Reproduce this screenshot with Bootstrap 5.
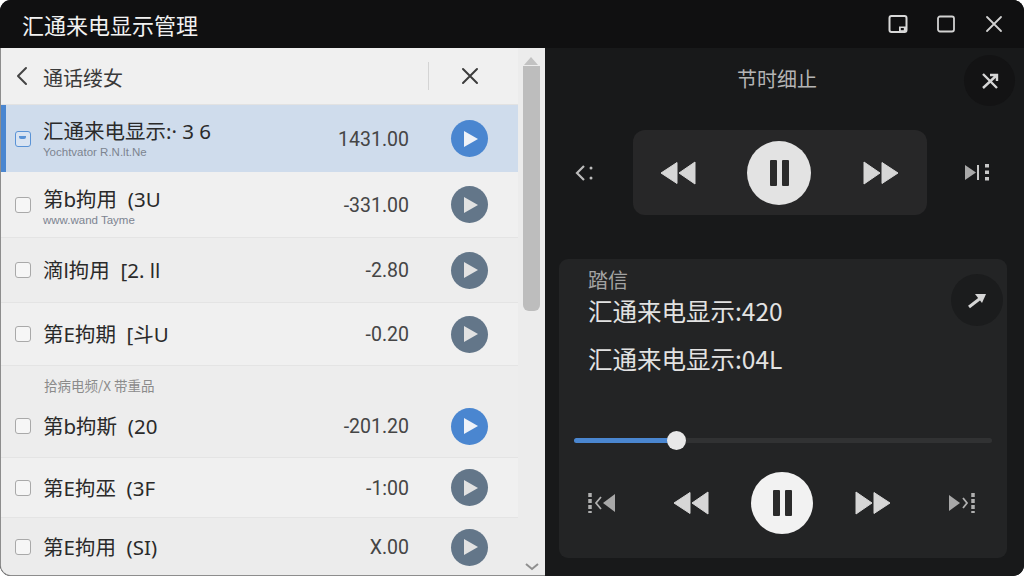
<!DOCTYPE html>
<html lang="zh">
<head>
<meta charset="utf-8">
<title>汇通来电显示管理</title>
<link href="https://cdn.jsdelivr.net/npm/bootstrap@5.3.0/dist/css/bootstrap.min.css" rel="stylesheet">
<style>
html,body{height:576px;overflow:hidden;background:#fff;}
body{font-family:"Noto Sans CJK SC","Noto Sans",sans-serif;}
.win{width:1024px;height:576px;border-radius:11px;overflow:hidden;background:#18191a;}
.titlebar{height:48px;background:#101011;color:#f2f2f2;padding:0 20px 0 23px;flex:none;}
.titlebar h1{font-size:22px;font-weight:400;margin:0 0 0 -1px;line-height:44px;}
.winbtns{gap:24px;}
.mainpane{height:528px;}
.leftpane{width:545px;flex:none;background:#f0f0f0;border-left:1px solid #8d8d8d;border-bottom:1px solid #8d8d8d;border-bottom-left-radius:11px;overflow:hidden;}
.listcol{width:517px;flex:none;}
.scrolltrack{width:27px;flex:none;background:#ececec;padding:3px 5px 0;position:relative;}
.scrollthumb{height:245px;margin-top:15px;background:#bdbdbd;border-radius:0 0 6px 6px;}
.scrollup{width:0;height:0;margin:0 auto;border:7px solid transparent;border-top:0;border-bottom:8px solid #c2c2c2;position:absolute;left:6px;top:9px;}
.lheader{height:57px;padding:0 39px 0 14px;border-bottom:1px solid #e2e2e2;color:#333;}
.lheader .ttl{font-size:20px;line-height:1;margin:3px 0 0 14px;color:#3a3a3a;}
.vsep{width:1px;height:28px;background:#d4d4d4;margin-right:32px;}
.calls{--bs-list-group-bg:transparent;--bs-list-group-border-width:0;}
.calls .callrow{display:flex;align-items:center;padding:0 30px 0 14px;border-bottom:1px solid #e4e4e4;background:#f0f0f0;color:#2a2a2a;}
.calls .callrow.h67{height:67px}.calls .callrow.h66{height:66px}.calls .callrow.h65{height:65px}.calls .callrow.h63{height:63px}.calls .callrow.h60{height:60px}.calls .callrow.h58{height:58px;border-bottom:0;background:#ececec}
.calls .callrow.alt{background:#ededed}
.calls .callrow.sel{background:#cfdcec;border-left:5px solid #4a86d0;padding-left:9px;border-bottom:0;}
.chk{width:16px;height:16px;border:1.5px solid #a9a9a9;border-radius:3px;background:#f6f6f6;flex:none;margin-right:12px;}
.sel .chk{border-color:#5a93d6;background:#d9e4f2;position:relative;}
.sel .chk::after{content:"";position:absolute;left:3px;top:4px;width:7px;height:3px;background:#5a93d6;border-radius:0 0 2px 2px;}
.cname{font-size:20.5px;line-height:24px;white-space:nowrap;font-family:"Noto Sans","Noto Sans CJK SC",sans-serif;}
.twoline{padding-top:4px;}
.csub{font-size:11.5px;line-height:13px;margin-top:3px;color:#7d8490;font-family:"Liberation Sans",sans-serif;white-space:nowrap;}
.camt{margin-left:auto;margin-top:2px;font-family:Roboto,sans-serif;font-size:19.5px;color:#454545;margin-right:42px;}
.playc{width:37px;height:37px;border-radius:50%;background:#637689;flex:none;display:flex;align-items:center;justify-content:center;padding-left:3px;}
.playc.blue{background:#4a86d0;}
.seclabel{font-size:13.5px;line-height:16px;color:#8b8b8b;padding:11px 0 0 43px;height:29px;background:#ededed;}
.rightpane{flex:1;background:#18191a;color:#d8d8d8;padding:0 17px 18px 14px;}
.rhead{height:82px;position:relative;}
.rhead .ttl2{font-size:20px;color:#b4b4b4;padding-right:12px;margin-top:-20px;}
.roundbtn{width:51px;height:51px;border-radius:50%;background:#131314;position:absolute;display:flex;align-items:center;justify-content:center;}
.rhead .roundbtn{right:-8px;top:7px;}
.transport{height:85px;margin-bottom:44px;padding:0 16px 0 16px;}
.tpanel{width:294px;height:85px;background:#272728;border-radius:12px;padding:0 28px 0 27px;}
.pausec{width:64px;height:64px;border-radius:50%;background:#e3e3e3;display:flex;align-items:center;justify-content:center;gap:5px;}
.pausec i{display:block;width:7px;height:26px;background:#2b2b2b;border-radius:1px;}
.pausec.lg{width:62px;height:62px;background:#f2f2f2;}
.cardbox{height:299px;background:#232425;border-radius:9px;border:0;position:relative;color:#e0e0e0;padding:11px 15px 0 15px;}
.cardbox .roundbtn{right:4px;top:15px;width:52px;height:52px;background:#1b1c1d;}
.clabel{font-size:20px;line-height:20px;color:#a3a3a3;padding-left:14px;margin-bottom:5px;}
.cline{font-size:24.5px;line-height:32px;padding-left:14px;font-weight:400;white-space:nowrap;color:#e2e2e2;}
.cline+.cline{margin-top:16px;}
.seekrow{margin-top:63px;height:20px;position:relative;}
.seektrack{height:5px;border-radius:3px;background:#313233;position:relative;}
.seekfill{height:5px;border-radius:3px;background:#4a86d0;}
.seekknob{position:absolute;top:-7px;width:19px;height:19px;border-radius:50%;background:#e8e8e8;margin-left:-10px;}
.bottomctl{padding:14px 16px 0 14px;}
.bottomctl .midgroup{gap:42px;}
</style>
</head>
<body>
<svg width="0" height="0" class="position-absolute">
<defs>
<symbol id="rew" viewBox="0 0 36 24"><path d="M17 1.500V22.500L1 12Z M35 1V23L19 12Z" fill="#d6d6d6" stroke="#d6d6d6" stroke-width="1" stroke-linejoin="round"/></symbol>
<symbol id="fwd" viewBox="0 0 36 24"><path d="M1 1V23L17 12Z M19 1.500V22.500L35 12Z" fill="#d6d6d6" stroke="#d6d6d6" stroke-width="1" stroke-linejoin="round"/></symbol>
</defs>
</svg>
<div class="win d-flex flex-column">
  <div class="titlebar d-flex align-items-center justify-content-between">
    <h1>汇通来电显示管理</h1>
    <div class="winbtns d-flex align-items-center">
      <svg width="20" height="20" viewBox="0 0 20 20"><rect x="1.500" y="2" width="17" height="16" rx="2" fill="none" stroke="#d8d8d8" stroke-width="2"/><path d="M11 12.500h7.500V18H11z" fill="#d8d8d8"/><rect x="12.800" y="14" width="3" height="2.200" fill="#101011"/></svg>
      <svg width="28" height="20" viewBox="0 0 28 20"><rect x="6" y="2.500" width="16" height="15" rx="2" fill="none" stroke="#d2d2d2" stroke-width="1.800"/></svg>
      <svg width="20" height="20" viewBox="0 0 20 20"><path d="M3 3L17 17M17 3L3 17" stroke="#d2d2d2" stroke-width="1.800" stroke-linecap="round"/></svg>
    </div>
  </div>
  <div class="mainpane d-flex">
    <div class="leftpane d-flex">
      <div class="listcol">
        <div class="lheader d-flex align-items-center">
          <svg width="14" height="20" viewBox="0 0 14 20"><path d="M11 2L3 10L11 18" fill="none" stroke="#444" stroke-width="2" stroke-linecap="round" stroke-linejoin="round"/></svg>
          <span class="ttl">通话缕女</span>
          <span class="vsep ms-auto"></span>
          <svg width="18" height="18" viewBox="0 0 18 18"><path d="M2 2L16 16M16 2L2 16" stroke="#3c3c3c" stroke-width="2" stroke-linecap="round"/></svg>
        </div>
        <div class="list-group list-group-flush calls rounded-0">
          <div class="list-group-item callrow sel h67"><span class="chk"></span><div><div class="cname">汇通来电显示:· 3 6</div><div class="csub">Yochtvator R.N.lt.Ne</div></div><span class="camt">1431.00</span><span class="playc blue"><svg width="16" height="18" viewBox="0 0 16 18"><path d="M1 1V17L15 9Z" fill="#eef2f8"/></svg></span></div>
          <div class="list-group-item callrow h66"><span class="chk"></span><div class="twoline"><div class="cname">第b拘用&nbsp; (3U</div><div class="csub">www.wand Tayme</div></div><span class="camt">-331.00</span><span class="playc"><svg width="16" height="18" viewBox="0 0 16 18"><path d="M1 1V17L15 9Z" fill="#e2e2e2"/></svg></span></div>
          <div class="list-group-item callrow alt h65"><span class="chk"></span><div class="cname">滴l拘用&nbsp; [2. ll</div><span class="camt">-2.80</span><span class="playc"><svg width="16" height="18" viewBox="0 0 16 18"><path d="M1 1V17L15 9Z" fill="#e2e2e2"/></svg></span></div>
          <div class="list-group-item callrow h63"><span class="chk"></span><div class="cname">第E拘期&nbsp; [斗U</div><span class="camt">-0.20</span><span class="playc"><svg width="16" height="18" viewBox="0 0 16 18"><path d="M1 1V17L15 9Z" fill="#e2e2e2"/></svg></span></div>
          <div class="seclabel">拾病电频/X 带重品</div>
          <div class="list-group-item callrow alt h63"><span class="chk"></span><div class="cname">第b拘斯&nbsp; (20</div><span class="camt">-201.20</span><span class="playc blue"><svg width="16" height="18" viewBox="0 0 16 18"><path d="M1 1V17L15 9Z" fill="#eef2f8"/></svg></span></div>
          <div class="list-group-item callrow h60"><span class="chk"></span><div class="cname">第E拘巫&nbsp; (3F</div><span class="camt">-1:00</span><span class="playc"><svg width="16" height="18" viewBox="0 0 16 18"><path d="M1 1V17L15 9Z" fill="#e2e2e2"/></svg></span></div>
          <div class="list-group-item callrow h58"><span class="chk"></span><div class="cname">第E拘用&nbsp; (SI)</div><span class="camt">X.00</span><span class="playc"><svg width="16" height="18" viewBox="0 0 16 18"><path d="M1 1V17L15 9Z" fill="#e2e2e2"/></svg></span></div>
        </div>
      </div>
      <div class="scrolltrack d-flex flex-column">
        <span class="scrollup"></span>
        <div class="scrollthumb"></div>
        <svg class="mt-auto mb-1 mx-auto" width="14" height="8" viewBox="0 0 14 8"><path d="M1 1L7 6L13 1" fill="none" stroke="#8f8f8f" stroke-width="2"/></svg>
      </div>
    </div>
    <div class="rightpane">
      <div class="rhead d-flex align-items-center justify-content-center">
        <span class="ttl2">节时细止</span>
        <span class="roundbtn"><svg width="20" height="20" viewBox="0 0 20 20"><path d="M3 3L17 17M3 17L17 4M10 4H17V10" fill="none" stroke="#d6d6d6" stroke-width="2.400"/></svg></span>
      </div>
      <div class="transport d-flex align-items-center justify-content-between">
        <svg width="20" height="18" viewBox="0 0 20 18"><path d="M9 2L2 9L9 16" fill="none" stroke="#bcbcbc" stroke-width="2.200"/><circle cx="16" cy="4" r="1.500" fill="#bcbcbc"/><circle cx="16" cy="14" r="1.500" fill="#bcbcbc"/></svg>
        <div class="tpanel d-flex align-items-center justify-content-between">
          <svg width="36" height="24"><use href="#rew"/></svg>
          <span class="pausec"><i></i><i></i></span>
          <svg width="36" height="24"><use href="#fwd"/></svg>
        </div>
        <svg width="27" height="20" viewBox="0 0 27 20"><path d="M1 2V17L12 9.500Z" fill="#a8a8a8"/><path d="M14 2V17" stroke="#c8c8c8" stroke-width="2"/><path d="M23 1V19" stroke="#c8c8c8" stroke-width="4" stroke-dasharray="3.500 3"/></svg>
      </div>
      <div class="card cardbox">
        <div class="clabel">踏信</div>
        <div class="cline">汇通来电显示:420</div>
        <div class="cline">汇通来电显示:04L</div>
        <span class="roundbtn"><svg width="20" height="18" viewBox="0 0 20 18"><path d="M2 16L15 6" fill="none" stroke="#d6d6d6" stroke-width="3"/><path d="M8 3H19L15 12Z" fill="#d6d6d6"/></svg></span>
        <div class="seekrow">
          <div class="seektrack"><div class="seekfill" style="width:24.600%"></div><span class="seekknob" style="left:24.600%"></span></div>
        </div>
        <div class="bottomctl d-flex align-items-center justify-content-between">
          <svg width="28" height="22" viewBox="0 0 28 22"><path d="M2 1V21" stroke="#b0b0b0" stroke-width="3.500" stroke-dasharray="4 2"/><path d="M13 5L8 11L13 17" fill="none" stroke="#b0b0b0" stroke-width="1.800"/><path d="M27 2V20L15 11Z" fill="#a8a8a8"/></svg>
          <div class="midgroup d-flex align-items-center">
            <svg width="36" height="24"><use href="#rew"/></svg>
            <span class="pausec lg"><i></i><i></i></span>
            <svg width="36" height="24"><use href="#fwd"/></svg>
          </div>
          <svg width="28" height="22" viewBox="0 0 28 22"><path d="M1 3V19L12 11Z" fill="#a8a8a8"/><path d="M15 6L19 11L15 16" fill="none" stroke="#b0b0b0" stroke-width="1.800"/><path d="M25 1V21" stroke="#b0b0b0" stroke-width="3.500" stroke-dasharray="4 2"/></svg>
        </div>
      </div>
    </div>
  </div>
</div>
<script src="https://cdn.jsdelivr.net/npm/bootstrap@5.3.0/dist/js/bootstrap.bundle.min.js"></script>
</body>
</html>
